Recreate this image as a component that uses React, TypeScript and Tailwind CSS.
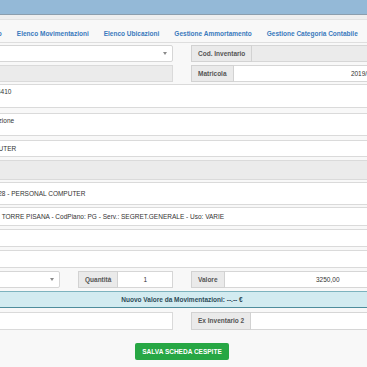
import React from 'react'

const navItems = [
    'Inserimento',
    'Elenco Movimentazioni',
    'Elenco Ubicazioni',
    'Gestione Ammortamento',
    'Gestione Categoria Contabile',
]

function Caret() {
    return <span className="w-0 h-0 border-x-[2px] border-x-transparent border-t-[3px] border-t-[#8a8a8a]" />
}

function Addon({ children, className = '' }: { children: React.ReactNode; className?: string }) {
    return (
        <div className={`flex items-center px-[6px] bg-[#eaeaea] border border-[#d2d2d2] text-[#555] font-bold whitespace-nowrap ${className}`}>
            {children}
        </div>
    )
}

// riga a tutta larghezza: etichetta fuori dal ritaglio + campo
function WideRow({
    label,
    labelW,
    value,
    h,
    mt,
    top = false,
    disabled = false,
}: {
    label: string
    labelW: string
    value?: string
    h: string
    mt: string
    top?: boolean
    disabled?: boolean
}) {
    return (
        <div className={`flex ${h} ${mt}`}>
            <div className={`${labelW} shrink-0 overflow-hidden bg-[#eaeaea] border border-[#d2d2d2] text-[#555] font-bold px-[6px] flex items-center`}>
                {label}
            </div>
            <div
                className={`flex-1 border border-l-0 border-[#dadada] pl-[6px] whitespace-nowrap text-[#333] flex ${top ? 'items-start pt-[3px]' : 'items-center'} ${disabled ? 'bg-[#ebebeb]' : 'bg-white'}`}
            >
                {value}
            </div>
        </div>
    )
}

export default function App() {
    return (
        <div className="w-[367px] h-[367px] overflow-hidden bg-[#f7f7f7] font-['Liberation_Sans',Arial,sans-serif] text-[6.5px] leading-[8px]">
            {/* Barra superiore */}
            <div className="h-[15px] bg-[#94b9d7] border-b border-[#8b9eae]" />
            <div className="h-[4px] bg-[#efefef]" />

            <div className="border-t border-[#e3e3e3] bg-[#f8f8f8]">
                {/* Navigazione */}
                <nav className="w-[500px] -ml-[68px] h-[23px] flex gap-[15px] pl-[33px] pt-[10px] border-b border-[#dedede] font-bold text-[#3a7abd] whitespace-nowrap">
                    {navItems.map((item) => (
                        <span key={item}>{item}</span>
                    ))}
                </nav>

                {/* Scheda */}
                <div className="w-[500px] -ml-[68px] pt-[2px] pb-[7px] flex flex-col">
                    <div className="grid grid-cols-2 gap-x-[18px] h-[17px]">
                        <div className="bg-white border border-[#d6d6d6] rounded-[2px] flex items-center justify-end pr-[5px]">
                            <Caret />
                        </div>
                        <div className="flex">
                            <Addon>Cod. Inventario</Addon>
                            <div className="flex-1 bg-[#ebebeb] border border-l-0 border-[#d6d6d6]" />
                        </div>
                    </div>

                    <div className="grid grid-cols-2 gap-x-[18px] h-[17px] mt-[3px]">
                        <div className="bg-[#ebebeb] border border-[#dadada]" />
                        <div className="flex">
                            <Addon>Matricola</Addon>
                            <div className="flex-1 bg-white border border-l-0 border-[#d6d6d6] flex items-center justify-end pr-[6px] text-[#333] whitespace-nowrap">
                                2019/PC/0054781234567
                            </div>
                        </div>
                    </div>

                    <WideRow label="Codice" labelW="w-[59px]" value="4410" h="h-[24px]" mt="mt-[2px]" top />
                    <WideRow label="Note" labelW="w-[44px]" value="Postazione" h="h-[23px]" mt="mt-[5px]" top />
                    <WideRow label="Tipo" labelW="w-[41px]" value="COMPUTER" h="h-[17px]" mt="mt-[4px]" />
                    <WideRow label="Gruppo" labelW="w-[50px]" h="h-[20px]" mt="mt-[3px]" disabled />
                    <WideRow label="Categoria" labelW="w-[53px]" value="4128 - PERSONAL COMPUTER" h="h-[23px]" mt="mt-[2px]" />
                    <WideRow
                        label="Ubicazione"
                        labelW="w-[45px]"
                        value="Sede: TORRE PISANA - CodPiano: PG - Serv.: SEGRET.GENERALE - Uso: VARIE"
                        h="h-[19px]"
                        mt="mt-[2px]"
                    />
                    <WideRow label="Fornitore" labelW="w-[50px]" h="h-[18px]" mt="mt-[3px]" />
                    <WideRow label="Documento" labelW="w-[50px]" h="h-[18px]" mt="mt-[3px]" />

                    <div className="grid grid-cols-2 gap-x-[18px] h-[17px] mt-[3px]">
                        <div className="grid grid-cols-[128px_1fr] gap-x-[18px]">
                            <div className="bg-white border border-[#d6d6d6] rounded-[2px] flex items-center justify-end pr-[5px]">
                                <Caret />
                            </div>
                            <div className="flex">
                                <Addon>Quantità</Addon>
                                <div className="flex-1 bg-white border border-l-0 border-[#d6d6d6] flex items-center justify-center text-[#333]">
                                    1
                                </div>
                            </div>
                        </div>
                        <div className="flex">
                            <Addon>Valore</Addon>
                            <div className="flex-1 bg-white border border-l-0 border-[#d6d6d6] flex items-center justify-center text-[#333]">
                                3250,00
                            </div>
                        </div>
                    </div>

                    <div className="h-[17px] mt-[3px] bg-[#d2ebf0] border-t border-t-[#7db3be] border-b border-b-[#4f8d9c] flex items-center justify-center font-bold text-[#2d4b58]">
                        Nuovo Valore da Movimentazioni: --.-- €
                    </div>

                    <div className="grid grid-cols-2 gap-x-[18px] h-[18px] mt-[4px]">
                        <div className="bg-white border border-[#dadada]" />
                        <div className="flex">
                            <Addon>Ex Inventario 2</Addon>
                            <div className="flex-1 bg-white border border-l-0 border-[#d6d6d6]" />
                        </div>
                    </div>

                    <button className="mt-[13px] mx-auto w-[94px] h-[17px] bg-[#27a744] rounded-[2px] text-white font-bold uppercase">
                        Salva Scheda Cespite
                    </button>
                </div>
            </div>
        </div>
    )
}
